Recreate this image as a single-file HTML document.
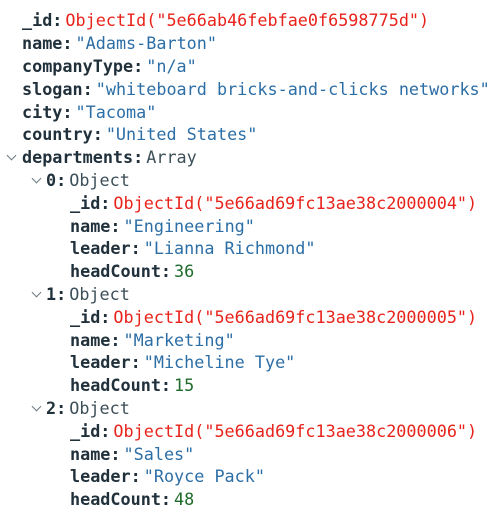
<!DOCTYPE html>
<html><head><meta charset="utf-8"><style>
body{margin:0;background:#fff;width:500px;height:521px;overflow:hidden;font-family:"DejaVu Sans Mono","Liberation Mono",monospace;font-size:16.8px;}
.r{position:absolute;height:22.8px;line-height:22.8px;white-space:pre;margin-top:1px}
.k{font-weight:bold;color:#21313c;margin-right:3px}
.s{color:#2c6ea6}.o{color:#e8231b}.n{color:#1e6b2a}.t{color:#3d4f58}
.c{position:absolute;width:6px;height:6px;border-right:1.2px solid #6b7a82;border-bottom:1.2px solid #6b7a82;transform:rotate(45deg);margin-top:1px}
</style></head><body>
<div class="r" style="top:8px;left:22px"><span class="k">_id:</span><span class="o">ObjectId("5e66ab46febfae0f6598775d")</span></div>
<div class="r" style="top:31px;left:22px"><span class="k">name:</span><span class="s">"Adams-Barton"</span></div>
<div class="r" style="top:54px;left:22px"><span class="k">companyType:</span><span class="s">"n/a"</span></div>
<div class="r" style="top:77px;left:22px"><span class="k">slogan:</span><span class="s">"whiteboard bricks-and-clicks networks"</span></div>
<div class="r" style="top:100px;left:22px"><span class="k">city:</span><span class="s">"Tacoma"</span></div>
<div class="r" style="top:122px;left:22px"><span class="k">country:</span><span class="s">"United States"</span></div>
<div class="c" style="top:151px;left:8px"></div>
<div class="r" style="top:145px;left:22px"><span class="k">departments:</span><span class="t">Array</span></div>
<div class="c" style="top:174px;left:33px"></div>
<div class="r" style="top:168px;left:46px"><span class="k">0:</span><span class="t">Object</span></div>
<div class="r" style="top:191px;left:70px"><span class="k">_id:</span><span class="o">ObjectId("5e66ad69fc13ae38c2000004")</span></div>
<div class="r" style="top:214px;left:70px"><span class="k">name:</span><span class="s">"Engineering"</span></div>
<div class="r" style="top:236px;left:70px"><span class="k">leader:</span><span class="s">"Lianna Richmond"</span></div>
<div class="r" style="top:259px;left:70px"><span class="k">headCount:</span><span class="n">36</span></div>
<div class="c" style="top:288px;left:33px"></div>
<div class="r" style="top:282px;left:46px"><span class="k">1:</span><span class="t">Object</span></div>
<div class="r" style="top:305px;left:70px"><span class="k">_id:</span><span class="o">ObjectId("5e66ad69fc13ae38c2000005")</span></div>
<div class="r" style="top:328px;left:70px"><span class="k">name:</span><span class="s">"Marketing"</span></div>
<div class="r" style="top:350px;left:70px"><span class="k">leader:</span><span class="s">"Micheline Tye"</span></div>
<div class="r" style="top:373px;left:70px"><span class="k">headCount:</span><span class="n">15</span></div>
<div class="c" style="top:402px;left:33px"></div>
<div class="r" style="top:396px;left:46px"><span class="k">2:</span><span class="t">Object</span></div>
<div class="r" style="top:419px;left:70px"><span class="k">_id:</span><span class="o">ObjectId("5e66ad69fc13ae38c2000006")</span></div>
<div class="r" style="top:442px;left:70px"><span class="k">name:</span><span class="s">"Sales"</span></div>
<div class="r" style="top:464px;left:70px"><span class="k">leader:</span><span class="s">"Royce Pack"</span></div>
<div class="r" style="top:487px;left:70px"><span class="k">headCount:</span><span class="n">48</span></div>
</body></html>
